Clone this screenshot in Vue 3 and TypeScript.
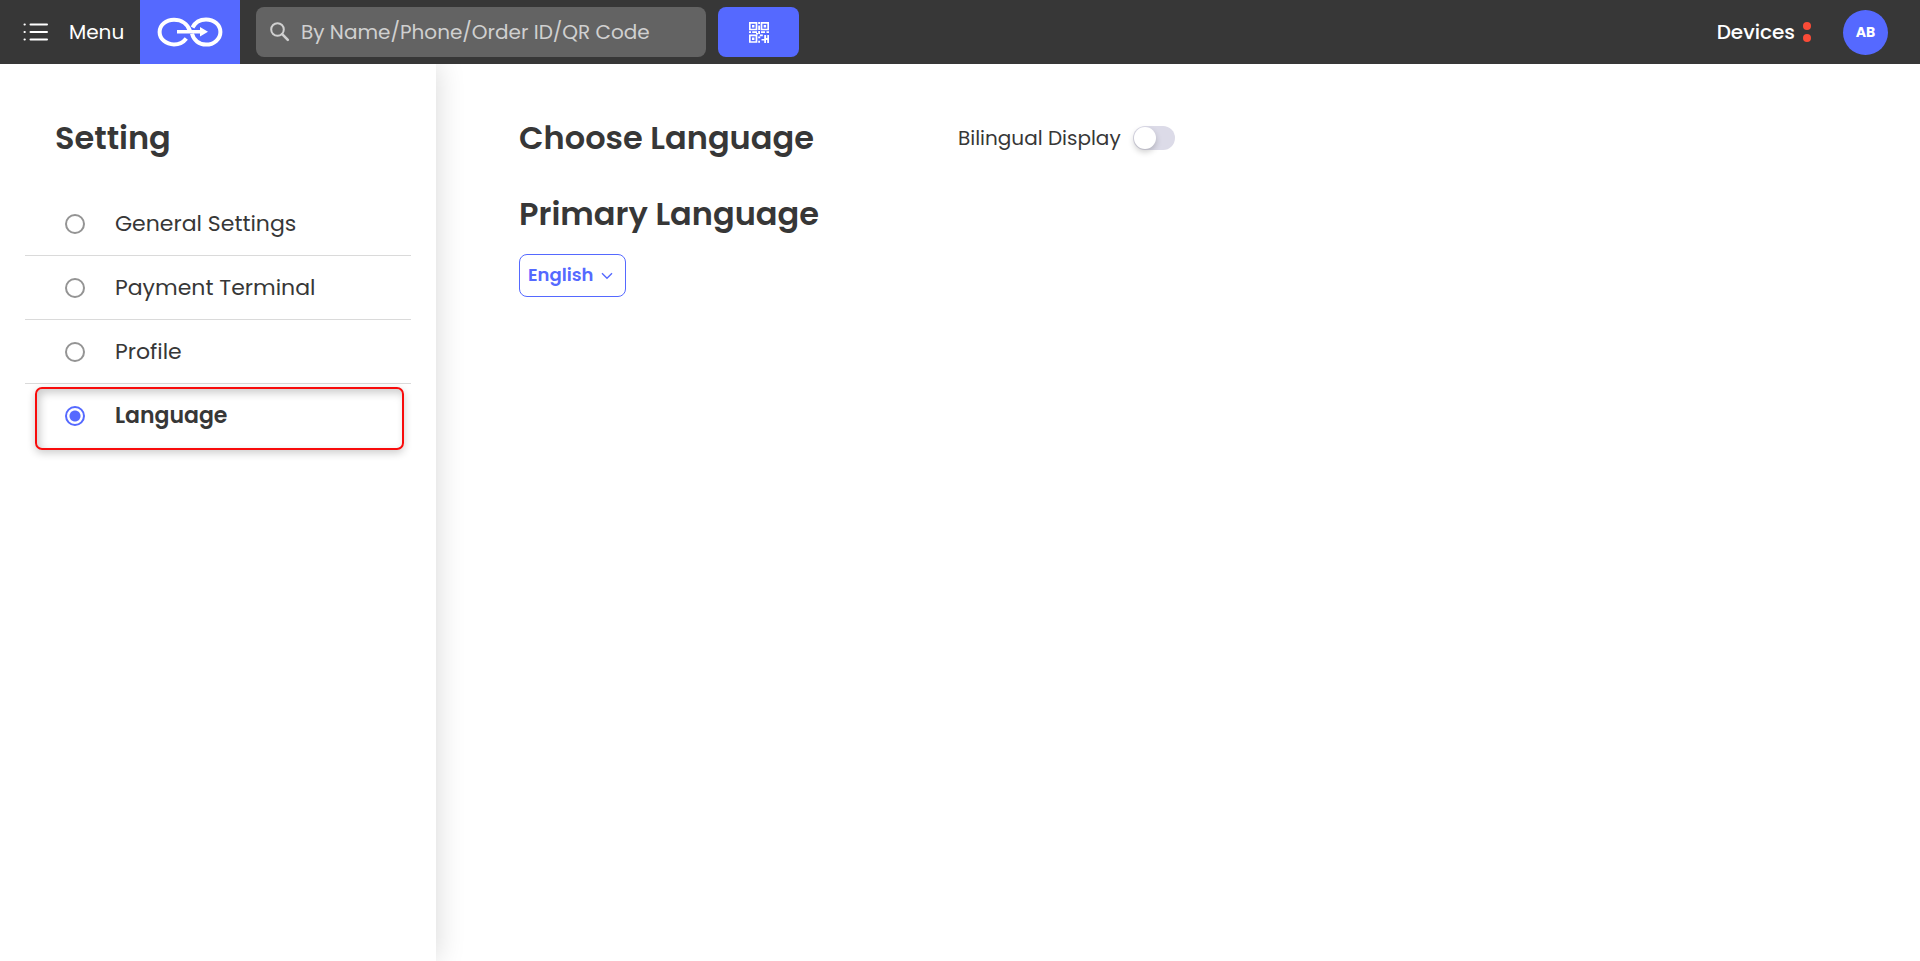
<script setup lang="ts">
import { ref } from 'vue'

interface Section {
  id: string
  label: string
}

const sections: Section[] = [
  { id: 'general', label: 'General Settings' },
  { id: 'payment', label: 'Payment Terminal' },
  { id: 'profile', label: 'Profile' },
  { id: 'language', label: 'Language' },
]

const active = ref('language')
const search = ref('')
const bilingual = ref(false)
const language = ref('English')
</script>

<template>
  <div class="page">
    <header class="topbar">
      <button class="menu" type="button">
        <svg width="26" height="20" viewBox="0 0 26 20" aria-hidden="true">
          <g fill="none" stroke="#fff" stroke-width="2" stroke-linecap="round">
            <path d="M7.500 2.500H24M7.500 10H24M7.500 17.500H24" />
            <path d="M1.500 2.500h.3M1.500 10h.3M1.500 17.500h.3" />
          </g>
        </svg>
        <span>Menu</span>
      </button>
      <a class="logo" href="#" aria-label="Home">
        <svg width="66" height="30" viewBox="0 0 66 30" aria-hidden="true">
          <g fill="none" stroke="#fff" stroke-width="4">
            <path d="M33 14C30.500 6.500 24 2.800 17 2.800 9 2.800 2.600 8 2.600 15S9 27.400 17 27.400c5.200 0 9.500-2.400 12.300-6" />
            <path d="M35.500 10.500C38 5.400 43 2.400 49 2.400 57 2.400 63.400 8 63.400 15S57 27.600 49 27.600c-6.800 0-12.400-4.400-14-11" />
          </g>
          <path d="M20 13h23V10l8 4.800-8 4.800V16.500H20z" fill="#fff" />
        </svg>
      </a>
      <label class="search">
        <svg width="20" height="20" viewBox="0 0 20 20" aria-hidden="true">
          <circle cx="7.500" cy="7.500" r="6.300" fill="none" stroke="#d0d0d0" stroke-width="2" />
          <path d="M12.200 12.200l5.600 5.600" stroke="#d0d0d0" stroke-width="2.600" stroke-linecap="round" />
        </svg>
        <input v-model="search" type="text" aria-label="Search" placeholder="By Name/Phone/Order ID/QR Code" />
      </label>
      <button class="scan" type="button" aria-label="Scan QR code">
        <svg width="20" height="21" viewBox="0 0 20 21" aria-hidden="true">
          <g fill="none" stroke="#fff" stroke-width="1.700">
            <path d="M.8.800h6.700v6.700H.8zM12.500.800h6.700v6.700h-6.700zM.8 13.300h6.700V20H.8z" />
          </g>
          <path
            fill="#fff"
            d="M3 3h2.400v2.400H3zM14.700 3h2.400v2.400h-2.400zM3 15.500h2.400v2.400H3zM9.200 0h1.800v2H9.200zM9.200 3.500h1.800V8H9.200zM0 9.300h2v1.700H0zM3.200 9.300h4.800v1.700H3.200zM9.200 9h1.800v3H9.200zM12 9.300h4v1.700h-4zM17.500 9.300H20v1.700h-2.500zM7 11h2v1.400H7zM10.800 12.500h3v1.700h-3zM9.200 14.500h2v1.700h-2zM9.200 18.800h1.800v2H9.200zM15.200 13h1.900v3h1.200v-3H20v8h-1.800v-3H17v3h-1.800v-2.500h-2.700V17h2.700z"
          />
        </svg>
      </button>
      <button class="devices" type="button">
        <span>Devices</span>
        <span class="dots" aria-hidden="true"><i></i><i></i></span>
      </button>
      <button class="avatar" type="button">AB</button>
    </header>

    <div class="body">
      <aside class="sidebar">
        <h2>Setting</h2>
        <div class="sections" role="radiogroup" aria-label="Setting">
          <label
            v-for="s in sections"
            :key="s.id"
            class="section"
            :class="{ active: active === s.id }"
          >
            <input v-model="active" type="radio" name="section" :value="s.id" />
            <span>{{ s.label }}</span>
          </label>
        </div>
      </aside>

      <main class="content">
        <div class="row">
          <h2>Choose Language</h2>
          <label class="switch">
            <span>Bilingual Display</span>
            <input v-model="bilingual" type="checkbox" role="switch" />
          </label>
        </div>
        <h2 id="primary-language">Primary Language</h2>
        <div class="picker">
          <select v-model="language" aria-labelledby="primary-language">
            <option>English</option>
          </select>
          <svg width="12" height="8" viewBox="0 0 12 8" aria-hidden="true">
            <path d="M1 1.200l5 5 5-5" fill="none" stroke="#5569ff" stroke-width="1.400" />
          </svg>
        </div>
      </main>
    </div>
  </div>
</template>

<style>
body {
  margin: 0;
  background: #fff;
}
</style>

<style scoped>
.page {
  display: flex;
  flex-direction: column;
  min-height: 100vh;
  color: #373737;
  font-family: Poppins, Inter, "Open Sans", sans-serif;
  font-size: 20px;
}

button,
input,
select {
  font: inherit;
  color: inherit;
}

button {
  border: 0;
  padding: 0;
  background: none;
  cursor: pointer;
}

.topbar {
  display: flex;
  align-items: center;
  height: 64px;
  padding-right: 32px;
  background: #373737;
  color: #fff;
}

.menu {
  display: flex;
  align-items: center;
  gap: 20px;
  width: 140px;
  padding-left: 23px;
  box-sizing: border-box;
}

.logo {
  display: grid;
  place-items: center;
  width: 100px;
  height: 64px;
  background: #5569ff;
}

.search {
  display: flex;
  align-items: center;
  gap: 11px;
  width: 450px;
  height: 50px;
  margin-left: 16px;
  padding: 0 14px;
  box-sizing: border-box;
  border-radius: 8px;
  background: #636363;
}

.search svg {
  flex: none;
}

.search input {
  flex: 1;
  min-width: 0;
  border: 0;
  padding: 0;
  background: none;
  outline: none;
  color: #fff;
}

.search input::placeholder {
  color: #d0d0d0;
  opacity: 1;
}

.scan {
  display: grid;
  place-items: center;
  width: 81px;
  height: 50px;
  margin-left: 12px;
  border-radius: 8px;
  background: #5569ff;
}

.devices {
  display: flex;
  align-items: center;
  gap: 8px;
  margin-left: auto;
  font-weight: 500;
}

.dots {
  display: grid;
  gap: 4px;
}

.dots i {
  width: 8px;
  height: 8px;
  border-radius: 50%;
  background: #fa4b37;
}

.avatar {
  width: 45px;
  height: 45px;
  margin-left: 32px;
  border-radius: 50%;
  background: #5569ff;
  font-size: 14px;
  font-weight: 700;
}

.body {
  display: flex;
  flex: 1;
}

h2 {
  margin: 0;
  font-size: 32px;
  line-height: 48px;
  font-weight: 600;
}

.sidebar {
  width: 436px;
  box-sizing: border-box;
  padding: 50px 25px 0;
  background: #fff;
  box-shadow: 0 0 28px rgba(0, 0, 0, 0.16);
  clip-path: inset(0 -40px 0 0);
}

.sidebar h2 {
  padding-left: 30px;
}

.sections {
  margin-top: 30px;
}

.section {
  position: relative;
  display: flex;
  align-items: center;
  gap: 30px;
  height: 64px;
  padding-left: 40px;
  box-sizing: border-box;
  border-bottom: 1px solid #dadada;
  font-size: 22px;
  cursor: pointer;
}

.section:last-child {
  border-bottom-color: transparent;
}

.section.active {
  font-weight: 600;
}

.section.active::after {
  content: "";
  position: absolute;
  inset: 3px 7px -3px 10px;
  border: 2px solid #f80c0c;
  border-radius: 7px;
  box-shadow: 0 3px 8px rgba(0, 0, 0, 0.2), inset 3px 4px 8px rgba(0, 0, 0, 0.2);
  pointer-events: none;
}

.section input {
  appearance: none;
  width: 20px;
  height: 20px;
  margin: 0;
  border: 2px solid #949494;
  border-radius: 50%;
}

.section input:checked {
  border-color: #5569ff;
  background: radial-gradient(circle, #5569ff 5px, transparent 6px);
}

.content {
  flex: 1;
  padding: 50px 40px 40px 83px;
}

.row {
  display: grid;
  grid-template-columns: 439px auto;
  justify-content: start;
  align-items: center;
  margin-bottom: 28px;
}

.switch {
  display: flex;
  align-items: center;
  gap: 12px;
  cursor: pointer;
}

.switch input {
  appearance: none;
  width: 42px;
  height: 24px;
  margin: 0;
  padding: 1px;
  box-sizing: border-box;
  border-radius: 12px;
  background: #dcdbe8;
}

.switch input::before {
  content: "";
  display: block;
  width: 22px;
  height: 22px;
  border-radius: 50%;
  background: #fff;
  box-shadow: 0 3px 6px rgba(0, 0, 0, 0.2);
}

.switch input:checked {
  background: #5569ff;
}

.switch input:checked::before {
  margin-left: auto;
}

.picker {
  position: relative;
  width: 107px;
  margin-top: 16px;
}

.picker select {
  appearance: none;
  display: block;
  width: 100%;
  height: 43px;
  padding: 0 24px 2px 8px;
  border: 1px solid #5569ff;
  border-radius: 8px;
  background: #fff;
  color: #5569ff;
  font-size: 18px;
  font-weight: 600;
}

.picker svg {
  position: absolute;
  right: 13px;
  top: 18px;
  pointer-events: none;
}
</style>
